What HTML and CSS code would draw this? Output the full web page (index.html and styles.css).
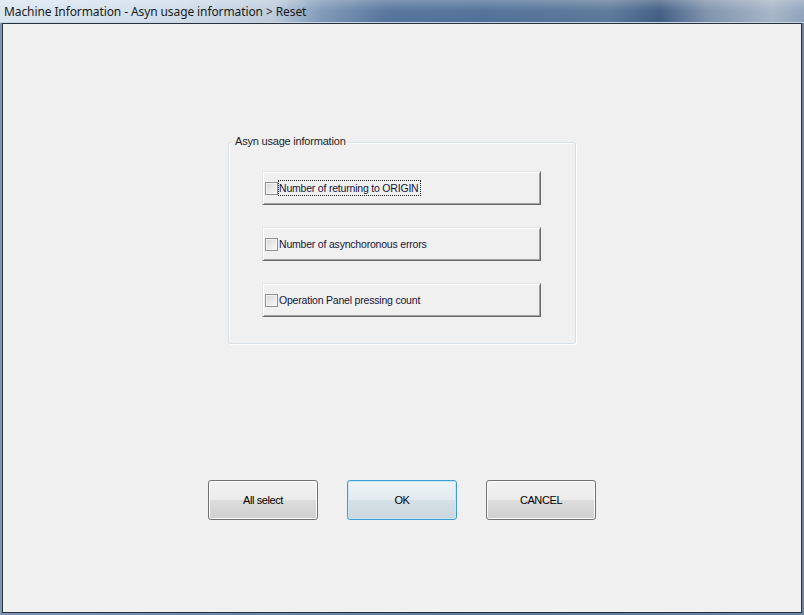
FILE: index.html
```html
<!DOCTYPE html>
<html lang="en">
<head>
    <meta charset="UTF-8">
    <title>Machine Information - Asyn usage information &gt; Reset</title>
    <link rel="stylesheet" href="styles.css">
</head>
<body>
    <div class="window">
        <div class="titlebar">
            <span class="title">Machine Information - Asyn usage information &gt; Reset</span>
        </div>
        <div class="client">
            <div class="group">
                <span class="legend">Asyn usage information</span>
                <div class="items">
                    <label class="item">
                        <span class="check"></span>
                        <span class="text focus">Number of returning to ORIGIN</span>
                    </label>
                    <label class="item">
                        <span class="check"></span>
                        <span class="text">Number of asynchoronous errors</span>
                    </label>
                    <label class="item">
                        <span class="check"></span>
                        <span class="text">Operation Panel pressing count</span>
                    </label>
                </div>
            </div>
            <div class="actions">
                <button class="btn">All select</button>
                <button class="btn default">OK</button>
                <button class="btn">CANCEL</button>
            </div>
        </div>
    </div>
</body>
</html>
```

FILE: styles.css
```css
html, body {
    margin: 0;
    padding: 0;
}
body {
    width: 804px;
    height: 615px;
    overflow: hidden;
    font-family: "Liberation Sans", Arial, sans-serif;
}
.window {
    width: 804px;
    height: 615px;
    box-sizing: border-box;
    display: flex;
    flex-direction: column;
    padding: 0 2px 2px 2px;
    background: linear-gradient(90deg, #7f96b2 0%, #5d7899 60%, #6d83a0 100%);
}
.titlebar {
    height: 22px;
    margin: 0 -2px;
    padding-left: 4px;
    display: flex;
    align-items: center;
    background:
        linear-gradient(180deg, rgba(255, 255, 255, 0.25) 0%, rgba(255, 255, 255, 0.05) 45%, rgba(0, 0, 0, 0) 100%),
        linear-gradient(90deg, #dbe6f1 0%, #cfdcea 22%, #bccbdc 34%, #7d97b6 40%, #54739a 48%, #4f6f97 60%, #5a7798 76%, #3f5c82 82%, #7d91ab 88%, #a6b4c6 96%, #8ea2bb 100%);
    border-bottom: 1px solid #c9d6e3;
}
.title {
    font-family: "Noto Sans", "DejaVu Sans", sans-serif;
    font-size: 12px;
    color: #1b1b1b;
    letter-spacing: -0.1px;
}
.client {
    flex: 1;
    background: #f0f0f0;
    border: 1px solid #26323f;
    display: flex;
    flex-direction: column;
    align-items: center;
}
.group {
    position: relative;
    width: 346px;
    height: 200px;
    margin-top: 118px;
    border: 1px solid #d5dfe5;
    border-radius: 3px;
    box-shadow: inset 1px 1px 0 #ffffff, 1px 1px 0 #ffffff;
}
.legend {
    position: absolute;
    top: -8px;
    left: 3px;
    padding: 0 3px;
    background: #f0f0f0;
    font-size: 11px;
    color: #1e1e1e;
    letter-spacing: -0.2px;
}
.items {
    display: flex;
    flex-direction: column;
    gap: 22px;
    margin: 28px 0 0 33px;
}
.item {
    width: 279px;
    height: 34px;
    box-sizing: border-box;
    display: flex;
    align-items: center;
    padding-left: 2px;
    background: #f0f0f0;
    border-top: 1px solid #e3e3e3;
    border-left: 1px solid #e3e3e3;
    border-right: 1px solid #696969;
    border-bottom: 1px solid #696969;
    box-shadow: inset 1px 1px 0 #ffffff, inset -1px -1px 0 #a0a0a0;
}
.check {
    width: 11px;
    height: 11px;
    border: 1px solid #8e8f8f;
    background: linear-gradient(135deg, #d8d8d8 0%, #ececec 60%, #f7f7f7 100%);
    box-shadow: inset 0 0 0 1px #f4f4f4;
    margin-right: 0;
    flex: none;
}
.text {
    font-size: 10.5px;
    color: #14143a;
    letter-spacing: -0.2px;
    padding: 1px 1px 1px 0;
    border: 1px dotted transparent;
}
.text.focus {
    border-color: #222222;
}
.actions {
    display: flex;
    gap: 29px;
    margin-top: 136px;
}
.btn {
    width: 110px;
    height: 40px;
    font-family: "Liberation Sans", Arial, sans-serif;
    font-size: 11px;
    letter-spacing: -0.4px;
    color: #000000;
    border: 1px solid #707070;
    border-radius: 3px;
    background: linear-gradient(180deg, #f2f2f2 0%, #ebebeb 49%, #dddddd 50%, #cfcfcf 100%);
    box-shadow: inset 0 0 0 1px #fcfcfc;
    padding: 0;
}
.btn.default {
    border-color: #3c9fd8;
    background: linear-gradient(180deg, #eef3f6 0%, #e3ebf0 49%, #d6e0e6 50%, #ccd7de 100%);
    box-shadow: inset 0 0 0 1px #c6e6f6;
}
```
